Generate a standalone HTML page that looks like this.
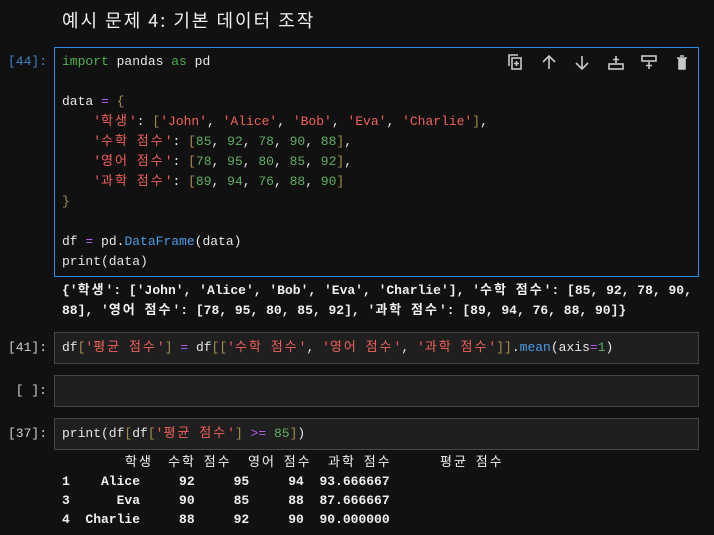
<!DOCTYPE html>
<html><head><meta charset="utf-8"><style>
body{margin:0;width:714px;height:535px;background:#111;overflow:hidden;position:relative;font-family:"Liberation Mono","Noto Sans CJK KR",monospace;font-size:13px;color:#e6e6e6}
.t{position:absolute;white-space:pre;line-height:20px}
.p{position:absolute;white-space:pre;line-height:20px;color:#cfcfcf;text-align:right;width:47px;left:0}
.cell{position:absolute;left:54px;width:645px;box-sizing:border-box;border:1px solid #454545;background:#1f1f1f}
.k{color:#4caf50}.s{color:#f0605a}.n{color:#5fae62}.b{color:#a58c52}.o{color:#b35df0}.f{color:#4b9be6}
.out{font-weight:bold;color:#f0f0f0}
i{font-style:normal;letter-spacing:2px}
</style></head><body>
<div class="t" style="left:62px;top:7px;font-family:'Noto Sans CJK KR',sans-serif;font-size:18px;line-height:26px;color:#f0f0f0;letter-spacing:2px">예시 문제 4: 기본 데이터 조작</div>

<div class="cell" style="top:47px;height:230px;background:#111;border:1px solid #2e8ee6"></div>
<div class="p" style="top:52px;color:#3b82c8">[44]:</div>
<div class="t" style="left:62px;top:52px"><span class="k">import</span> pandas <span class="k">as</span> pd

data <span class="o">=</span> <span class="b">{</span>
    <span class="s">'<i>학생</i>'</span>: <span class="b">[</span><span class="s">'John'</span>, <span class="s">'Alice'</span>, <span class="s">'Bob'</span>, <span class="s">'Eva'</span>, <span class="s">'Charlie'</span><span class="b">]</span>,
    <span class="s">'<i>수학</i> <i>점수</i>'</span>: <span class="b">[</span><span class="n">85</span>, <span class="n">92</span>, <span class="n">78</span>, <span class="n">90</span>, <span class="n">88</span><span class="b">]</span>,
    <span class="s">'<i>영어</i> <i>점수</i>'</span>: <span class="b">[</span><span class="n">78</span>, <span class="n">95</span>, <span class="n">80</span>, <span class="n">85</span>, <span class="n">92</span><span class="b">]</span>,
    <span class="s">'<i>과학</i> <i>점수</i>'</span>: <span class="b">[</span><span class="n">89</span>, <span class="n">94</span>, <span class="n">76</span>, <span class="n">88</span>, <span class="n">90</span><span class="b">]</span>
<span class="b">}</span>

df <span class="o">=</span> pd.<span class="f">DataFrame</span>(data)
print(data)</div>
<svg style="position:absolute;left:505px;top:52px" width="190" height="22" viewBox="0 0 190 22" fill="none" stroke="#c8c8c8" stroke-width="1.6">
<rect x="7" y="6" width="9" height="11"/><path d="M4 14V3h9"/><path d="M11.5 9v5M9 11.5h5"/>
<path d="M44 4v13M38 10l6-6 6 6"/>
<path d="M77 4v13M71 11l6 6 6-6"/>
<path d="M111 4v7M108 7.5h6"/><rect x="104" y="12" width="14" height="5"/>
<rect x="137" y="4" width="14" height="5"/><path d="M144 10v7M141 13.5h6"/>
<path d="M172 6h10M174 6v11h6V6M175 4h4" fill="#c8c8c8"/>
</svg>

<div class="t out" style="left:62px;top:281px">{'<i>학생</i>': ['John', 'Alice', 'Bob', 'Eva', 'Charlie'], '<i>수학</i> <i>점수</i>': [85, 92, 78, 90,
88], '<i>영어</i> <i>점수</i>': [78, 95, 80, 85, 92], '<i>과학</i> <i>점수</i>': [89, 94, 76, 88, 90]}</div>

<div class="cell" style="top:332px;height:32px"></div>
<div class="p" style="top:338px">[41]:</div>
<div class="t" style="left:62px;top:338px">df<span class="b">[</span><span class="s">'<i>평균</i> <i>점수</i>'</span><span class="b">]</span> <span class="o">=</span> df<span class="b">[[</span><span class="s">'<i>수학</i> <i>점수</i>'</span>, <span class="s">'<i>영어</i> <i>점수</i>'</span>, <span class="s">'<i>과학</i> <i>점수</i>'</span><span class="b">]]</span>.<span class="f">mean</span>(axis<span class="o">=</span><span class="n">1</span>)</div>

<div class="cell" style="top:375px;height:32px"></div>
<div class="p" style="top:381px">[ ]:</div>

<div class="cell" style="top:418px;height:32px"></div>
<div class="p" style="top:424px">[37]:</div>
<div class="t" style="left:62px;top:424px">print(df<span class="b">[</span>df<span class="b">[</span><span class="s">'<i>평균</i> <i>점수</i>'</span><span class="b">]</span> <span class="o">&gt;=</span> <span class="n">85</span><span class="b">]</span>)</div>

<div class="t" style="left:125px;top:453px;color:#f0f0f0"><i>학생</i></div>
<div class="t" style="left:168px;top:453px;color:#f0f0f0"><i>수학</i> <i>점수</i></div>
<div class="t" style="left:248px;top:453px;color:#f0f0f0"><i>영어</i> <i>점수</i></div>
<div class="t" style="left:328px;top:453px;color:#f0f0f0"><i>과학</i> <i>점수</i></div>
<div class="t" style="left:440px;top:453px;color:#f0f0f0"><i>평균</i> <i>점수</i></div>
<div class="t out" style="left:62px;top:472px;line-height:19px">1    Alice     92     95     94  93.666667
3      Eva     90     85     88  87.666667
4  Charlie     88     92     90  90.000000</div>
</body></html>
